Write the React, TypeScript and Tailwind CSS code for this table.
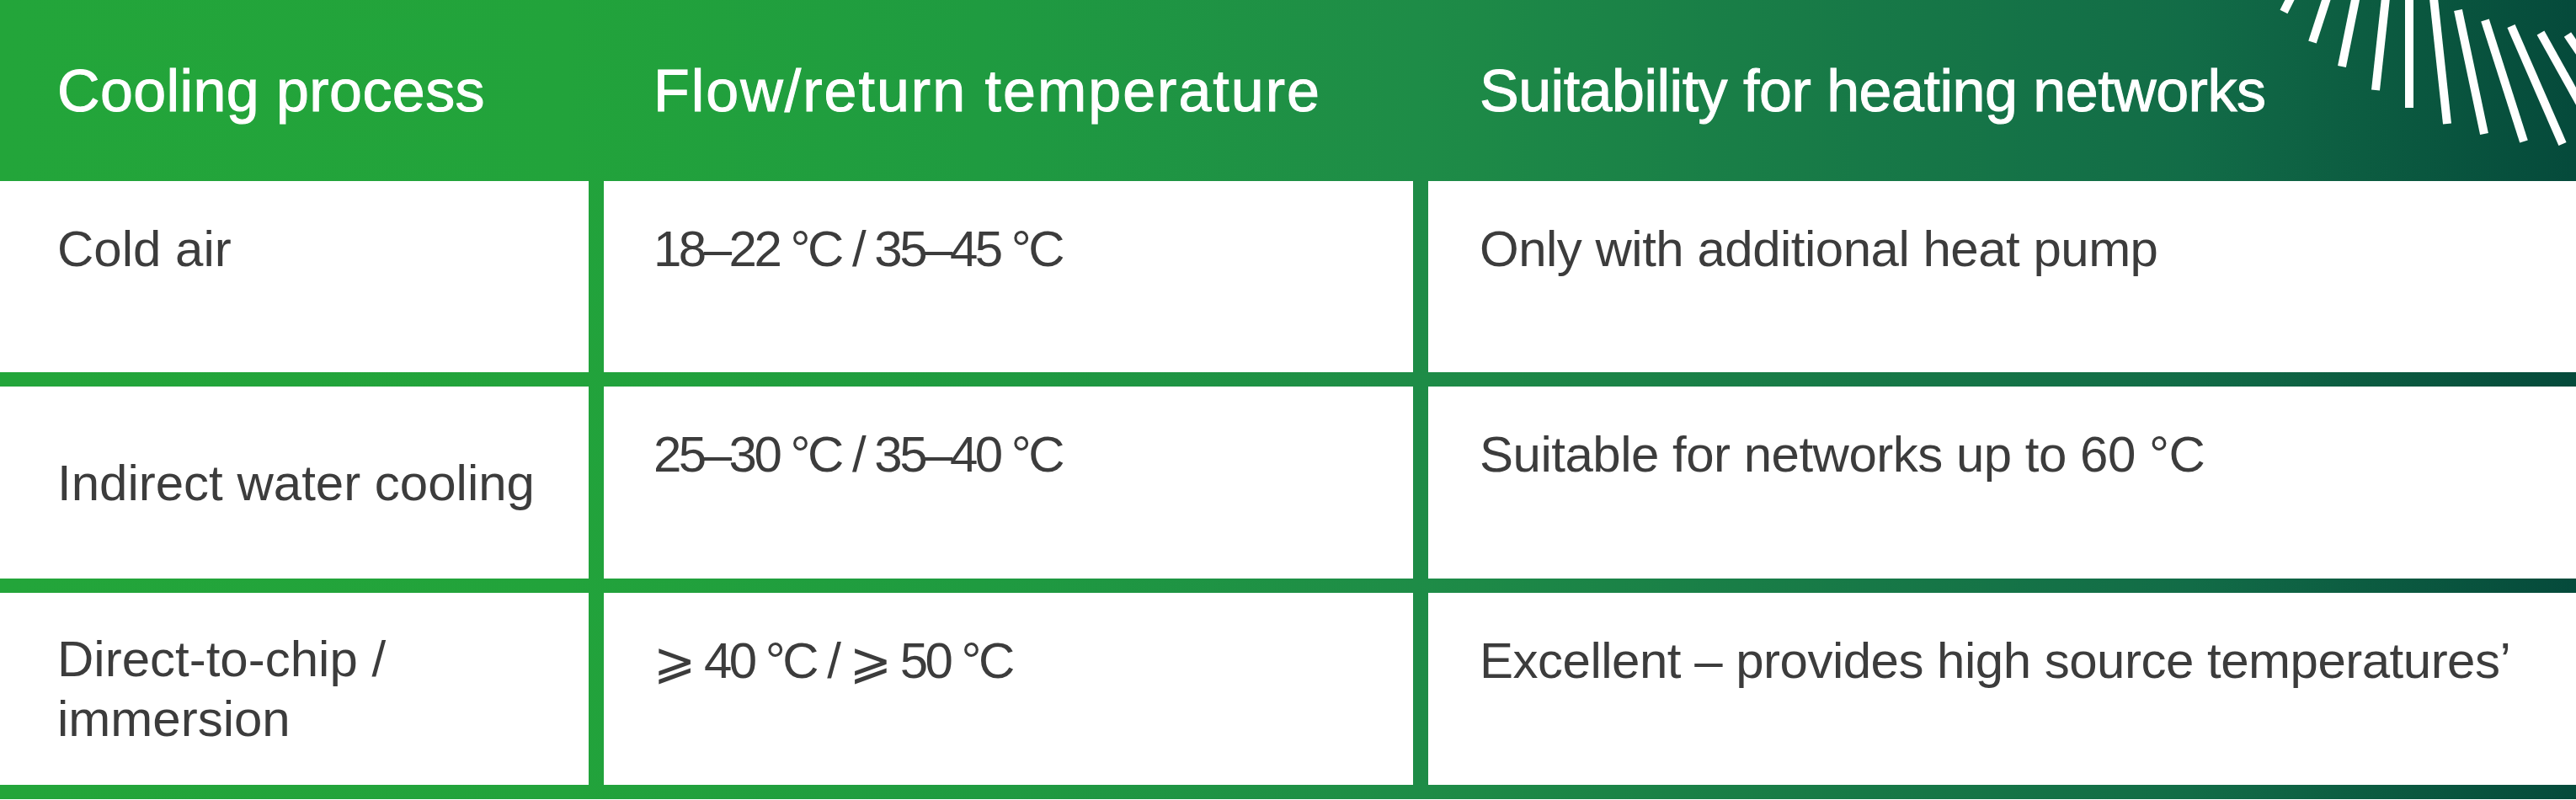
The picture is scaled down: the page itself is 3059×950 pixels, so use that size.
import React from "react";

type Cell = { text: React.ReactNode; center?: boolean };

const headers = ["Cooling process", "Flow/return temperature", "Suitability for heating networks"];

const rows: Cell[][] = [
  [{ text: "Cold air" }, { text: "18–22 °C / 35–45 °C" }, { text: "Only with additional heat pump" }],
  [
    { text: "Indirect water cooling", center: true },
    { text: "25–30 °C / 35–40 °C" },
    { text: "Suitable for networks up to 60 °C" },
  ],
  [
    {
      text: (
        <>
          Direct-to-chip /<br />
          immersion
        </>
      ),
      center: true,
    },
    { text: "⩾ 40 °C / ⩾ 50 °C" },
    { text: "Excellent – provides high source temperatures’" },
  ],
];

// sunburst rays in page coordinates (x1, y1, x2, y2)
const rays = [
  [2733, -28, 2712, 14],
  [2772, -30, 2746, 50],
  [2803, -30, 2781, 79],
  [2836, -30, 2821, 107],
  [2861, -30, 2861, 128],
  [2887, -30, 2906, 147],
  [2919, 12, 2950, 159],
  [2951, 24, 2997, 168],
  [2982, 31, 3043, 171],
  [3017, 39, 3090, 170],
  [3049, 41, 3133, 165],
];

const pad = ["pl-[68px]", "pl-[59px]", "pl-[61px]"];
const headTrack = ["tracking-[0.4px]", "tracking-[2px]", "tracking-[-0.5px]"];
const bodyTrack = ["", "tracking-[-3.5px]", "tracking-[-0.5px]"];

export default function App() {
  return (
    <div className="w-[3059px] bg-white font-['Liberation_Sans','DejaVu_Sans',sans-serif]">
      <div className="relative h-[949px] w-full bg-[linear-gradient(90deg,#23a53a_0%,#22a33b_22%,#1f9b40_38%,#1e8c47_55%,#187b47_70%,#126c47_85%,#0a573f_94%,#054a3b_100%)]">
        <svg
          className="absolute right-0 top-0 h-[215px] w-[380px]"
          viewBox="2679 0 380 215"
          fill="none"
        >
          {rays.map(([x1, y1, x2, y2], i) => (
            <line key={i} x1={x1} y1={y1} x2={x2} y2={y2} stroke="#fff" strokeWidth={10} strokeLinecap="butt" />
          ))}
        </svg>

        {/* Header */}
        <div className="relative grid h-[215px] grid-cols-[699px_961px_1fr] gap-x-[18px] text-[70px] leading-none text-white [-webkit-text-stroke:1px_white]">
          {headers.map((h, i) => (
            <div key={h} className={`flex items-center ${pad[i]} ${headTrack[i]}`}>
              {h}
            </div>
          ))}
        </div>

        {/* Body */}
        <div className="grid grid-cols-[699px_961px_1fr] grid-rows-[227px_228px_228px] gap-x-[18px] gap-y-[17px] text-[60px] leading-[71px] text-[#3c3c3c]">
          {rows.map((row, r) =>
            row.map((cell, c) => (
              <div
                key={`${r}-${c}`}
                className={`flex bg-white ${pad[c]} ${bodyTrack[c]} ${cell.center ? "items-center" : "items-start pt-[45px]"}`}
              >
                <div>{cell.text}</div>
              </div>
            ))
          )}
        </div>
      </div>
    </div>
  );
}
